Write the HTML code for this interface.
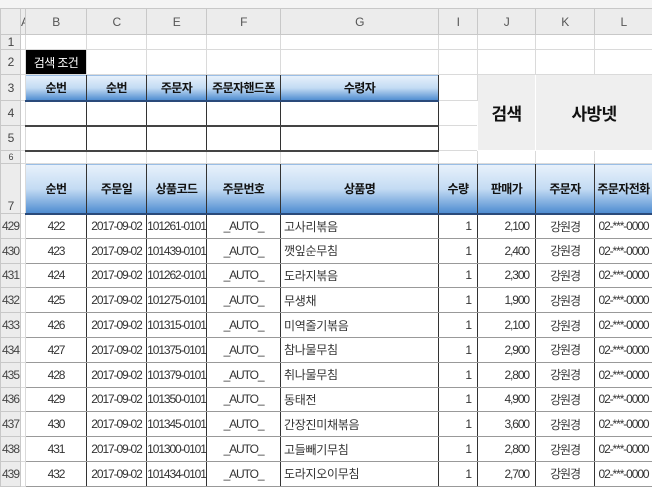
<!DOCTYPE html><html><head><meta charset="utf-8"><style>
html,body{margin:0;padding:0;background:#fff;width:652px;height:488px;overflow:hidden}
body{font-family:"Liberation Sans","Noto Sans CJK KR",sans-serif;font-size:12px;color:#222}
.top{position:absolute;left:0;top:0;width:652px;height:8px;background:#f4f4f4}
table{position:absolute;left:0;top:8px;border-collapse:collapse;table-layout:fixed;width:652px}
td{padding:0;border:1px solid #dadada;text-align:center;white-space:nowrap;overflow:hidden;letter-spacing:-0.6px}
td.rh{background:#ececec;color:#444;border-color:#c8c8c8;font-size:12px;letter-spacing:-1px}
tr.ch td{background:#ececec;color:#555;border-color:#c8c8c8;font-size:12px}
.h{background:linear-gradient(#e8f1fb,#c3dbf3 50%,#4c8bd0);font-weight:bold;border:1px solid #333;border-bottom:2px solid #2a4a7a;font-size:12px;color:#111}
.in{border:1px solid #333;border-top:2px solid #555;border-bottom:2px solid #444}
.d{border-left:1px solid #333;border-right:1px solid #333;border-top:1px solid #999;border-bottom:1px solid #999;font-size:12px;letter-spacing:-1.1px;color:#333}
.l{text-align:left;padding-left:3px;letter-spacing:-0.3px}
.r{text-align:right;padding-right:6px}
.btn{background:#efefef;font-weight:bold;font-size:17px;border:1px solid #fff;color:#111}
.blk{background:#000;color:#fff;font-size:12px;text-align:center}
</style></head><body><div class="top"></div>
<table>
<colgroup><col style="width:20px"><col style="width:5px"><col style="width:61px"><col style="width:60px"><col style="width:60px"><col style="width:74px"><col style="width:158px"><col style="width:39px"><col style="width:58px"><col style="width:59px"><col style="width:58px"></colgroup>
<tr class="ch" style="height:26px"><td></td><td>A</td><td>B</td><td>C</td><td>E</td><td>F</td><td>G</td><td>I</td><td>J</td><td>K</td><td>L</td></tr>
<tr style="height:14px"><td class="rh">1</td><td></td><td></td><td></td><td></td><td></td><td></td><td></td><td></td><td></td><td></td></tr>
<tr style="height:25px"><td class="rh">2</td><td></td><td class="blk">검색 조건</td><td></td><td></td><td></td><td></td><td></td><td></td><td></td><td></td></tr>
<tr style="height:26px"><td class="rh">3</td><td></td><td class="h">순번</td><td class="h">순번</td><td class="h">주문자</td><td class="h">주문자핸드폰</td><td class="h">수령자</td><td></td><td class="btn" rowspan="3">검색</td><td class="btn" colspan="2" rowspan="3">사방넷</td></tr>
<tr style="height:25px"><td class="rh">4</td><td></td><td class="in"></td><td class="in"></td><td class="in"></td><td class="in"></td><td class="in"></td><td></td></tr>
<tr style="height:25px"><td class="rh">5</td><td></td><td class="in"></td><td class="in"></td><td class="in"></td><td class="in"></td><td class="in"></td><td></td></tr>
<tr style="height:13px"><td class="rh" style="font-size:9px">6</td><td></td><td></td><td></td><td></td><td></td><td></td><td></td><td></td><td></td><td></td></tr>
<tr style="height:50px"><td class="rh" style="vertical-align:bottom">7</td><td></td><td class="h">순번</td><td class="h">주문일</td><td class="h">상품코드</td><td class="h">주문번호</td><td class="h">상품명</td><td class="h">수량</td><td class="h">판매가</td><td class="h">주문자</td><td class="h">주문자전화</td></tr>
<tr style="height:24.8px"><td class="rh">429</td><td></td><td class="d">422</td><td class="d">2017-09-02</td><td class="d">101261-0101</td><td class="d">_AUTO_</td><td class="d l">고사리볶음</td><td class="d r">1</td><td class="d r">2,100</td><td class="d">강원경</td><td class="d">02-***-0000</td></tr>
<tr style="height:24.8px"><td class="rh">430</td><td></td><td class="d">423</td><td class="d">2017-09-02</td><td class="d">101439-0101</td><td class="d">_AUTO_</td><td class="d l">깻잎순무침</td><td class="d r">1</td><td class="d r">2,400</td><td class="d">강원경</td><td class="d">02-***-0000</td></tr>
<tr style="height:24.8px"><td class="rh">431</td><td></td><td class="d">424</td><td class="d">2017-09-02</td><td class="d">101262-0101</td><td class="d">_AUTO_</td><td class="d l">도라지볶음</td><td class="d r">1</td><td class="d r">2,300</td><td class="d">강원경</td><td class="d">02-***-0000</td></tr>
<tr style="height:24.8px"><td class="rh">432</td><td></td><td class="d">425</td><td class="d">2017-09-02</td><td class="d">101275-0101</td><td class="d">_AUTO_</td><td class="d l">무생채</td><td class="d r">1</td><td class="d r">1,900</td><td class="d">강원경</td><td class="d">02-***-0000</td></tr>
<tr style="height:24.8px"><td class="rh">433</td><td></td><td class="d">426</td><td class="d">2017-09-02</td><td class="d">101315-0101</td><td class="d">_AUTO_</td><td class="d l">미역줄기볶음</td><td class="d r">1</td><td class="d r">2,100</td><td class="d">강원경</td><td class="d">02-***-0000</td></tr>
<tr style="height:24.8px"><td class="rh">434</td><td></td><td class="d">427</td><td class="d">2017-09-02</td><td class="d">101375-0101</td><td class="d">_AUTO_</td><td class="d l">참나물무침</td><td class="d r">1</td><td class="d r">2,900</td><td class="d">강원경</td><td class="d">02-***-0000</td></tr>
<tr style="height:24.8px"><td class="rh">435</td><td></td><td class="d">428</td><td class="d">2017-09-02</td><td class="d">101379-0101</td><td class="d">_AUTO_</td><td class="d l">취나물무침</td><td class="d r">1</td><td class="d r">2,800</td><td class="d">강원경</td><td class="d">02-***-0000</td></tr>
<tr style="height:24.8px"><td class="rh">436</td><td></td><td class="d">429</td><td class="d">2017-09-02</td><td class="d">101350-0101</td><td class="d">_AUTO_</td><td class="d l">동태전</td><td class="d r">1</td><td class="d r">4,900</td><td class="d">강원경</td><td class="d">02-***-0000</td></tr>
<tr style="height:24.8px"><td class="rh">437</td><td></td><td class="d">430</td><td class="d">2017-09-02</td><td class="d">101345-0101</td><td class="d">_AUTO_</td><td class="d l">간장진미채볶음</td><td class="d r">1</td><td class="d r">3,600</td><td class="d">강원경</td><td class="d">02-***-0000</td></tr>
<tr style="height:24.8px"><td class="rh">438</td><td></td><td class="d">431</td><td class="d">2017-09-02</td><td class="d">101300-0101</td><td class="d">_AUTO_</td><td class="d l">고들빼기무침</td><td class="d r">1</td><td class="d r">2,800</td><td class="d">강원경</td><td class="d">02-***-0000</td></tr>
<tr style="height:24.8px"><td class="rh">439</td><td></td><td class="d">432</td><td class="d">2017-09-02</td><td class="d">101434-0101</td><td class="d">_AUTO_</td><td class="d l">도라지오이무침</td><td class="d r">1</td><td class="d r">2,700</td><td class="d">강원경</td><td class="d">02-***-0000</td></tr>
</table></body></html>
